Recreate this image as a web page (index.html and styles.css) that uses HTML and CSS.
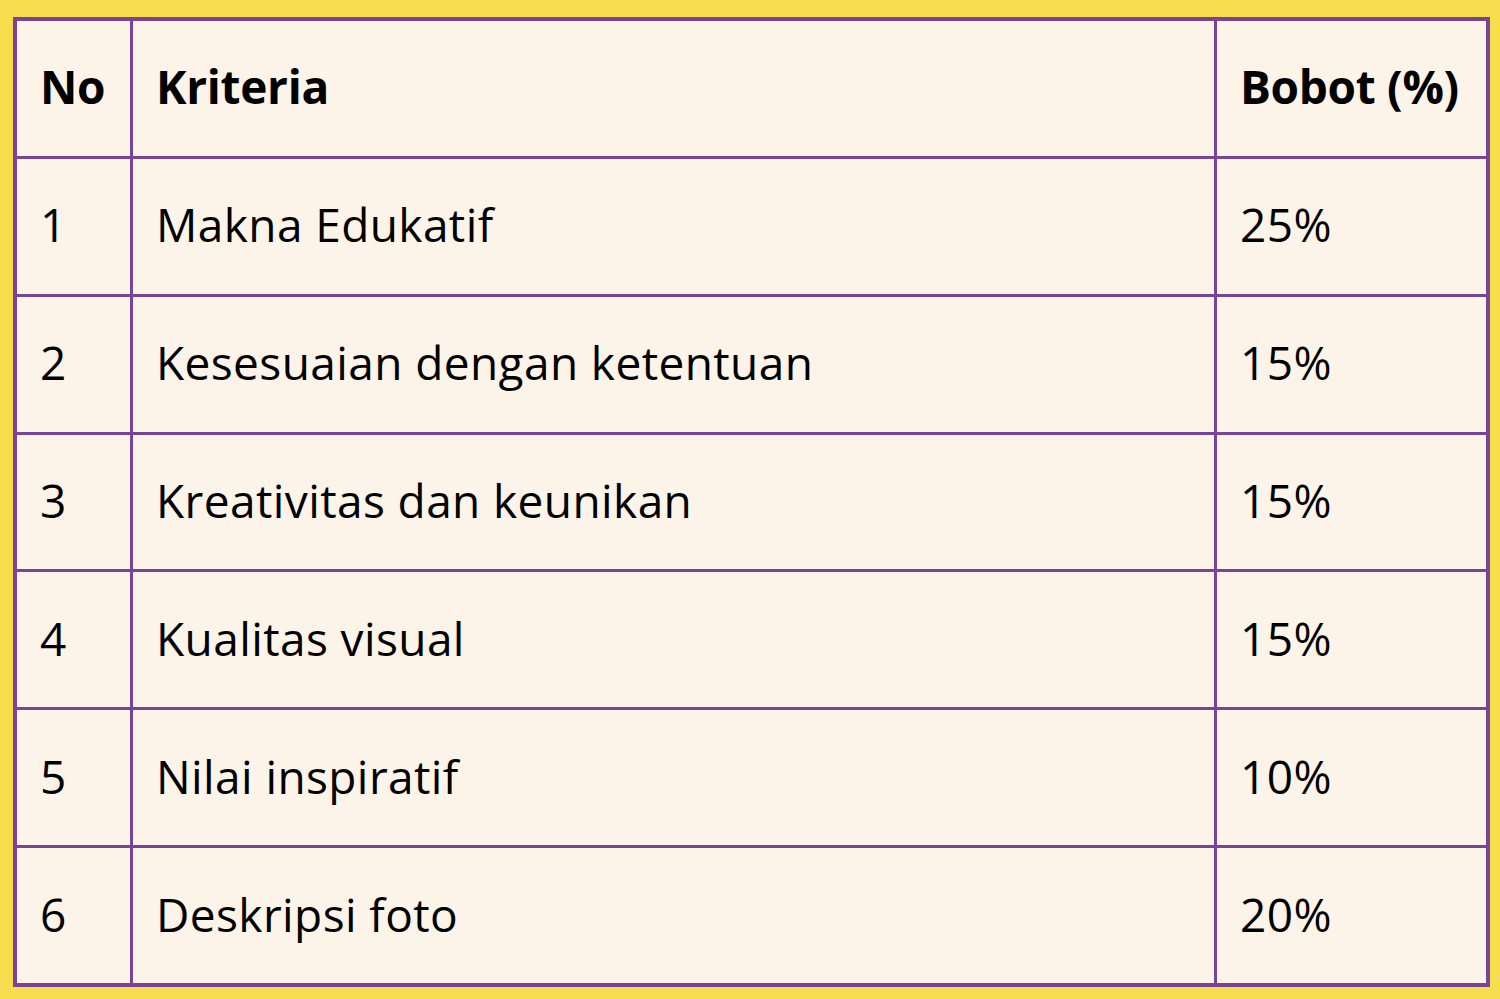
FILE: index.html
```html
<!DOCTYPE html>
<html lang="id">
<head>
<meta charset="utf-8">
<title>Kriteria Penilaian</title>
<link rel="stylesheet" href="styles.css">
</head>
<body>
<div class="page">
  <div class="table">
    <div class="cell head">No</div>
    <div class="cell head">Kriteria</div>
    <div class="cell head">Bobot (%)</div>

    <div class="cell">1</div>
    <div class="cell">Makna Edukatif</div>
    <div class="cell">25%</div>

    <div class="cell">2</div>
    <div class="cell">Kesesuaian dengan ketentuan</div>
    <div class="cell">15%</div>

    <div class="cell">3</div>
    <div class="cell">Kreativitas dan keunikan</div>
    <div class="cell">15%</div>

    <div class="cell">4</div>
    <div class="cell">Kualitas visual</div>
    <div class="cell">15%</div>

    <div class="cell">5</div>
    <div class="cell">Nilai inspiratif</div>
    <div class="cell">10%</div>

    <div class="cell">6</div>
    <div class="cell">Deskripsi foto</div>
    <div class="cell">20%</div>
  </div>
</div>
</body>
</html>
```
FILE: styles.css
```css
html, body {
  margin: 0;
  padding: 0;
  background: #f6dd4e;
}
.page {
  width: 1500px;
  height: 999px;
  box-sizing: border-box;
  padding: 17px 10px 12px 13px;
}
.table {
  display: grid;
  grid-template-columns: 113px 1081px 269px;
  grid-template-rows: repeat(7, 1fr);
  gap: 3px;
  width: 1477px;
  height: 970px;
  box-sizing: border-box;
  border: 4px solid #7a4496;
  background: #7a4496;
}
.cell {
  background: #fcf4e8;
  display: flex;
  align-items: center;
  padding-left: 23px;
  padding-bottom: 4px;
  font-family: "Open Sans", "Noto Sans", sans-serif;
  font-size: 46px;
  letter-spacing: 0.4px;
  color: #000;
}
.head {
  font-weight: 700;
  letter-spacing: -0.3px;
}
```
